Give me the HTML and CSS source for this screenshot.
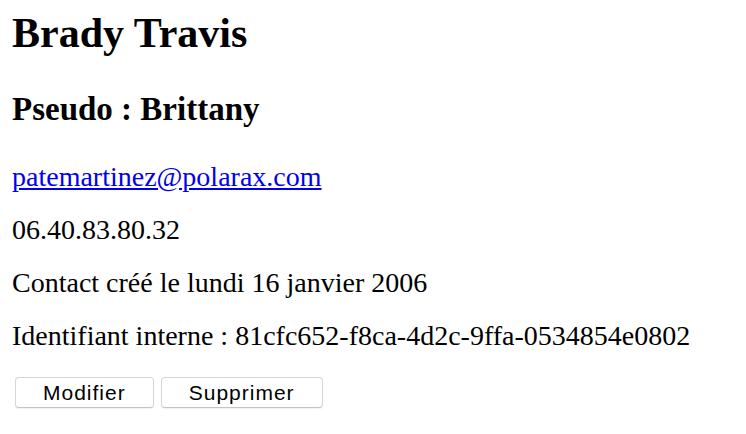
FILE: index.html
```html
<!DOCTYPE html>
<html>
<head>
    <meta charset="utf-8">
    <link rel="stylesheet" href="styles.css">
</head>
<body>
    <div class="contact">
        <h1>Brady Travis</h1>
        <h2>Pseudo : Brittany</h2>
        <p><a href="mailto:patemartinez@polarax.com">patemartinez@polarax.com</a></p>
        <p>06.40.83.80.32</p>
        <p>Contact créé le lundi 16 janvier 2006</p>
        <p>Identifiant interne : 81cfc652-f8ca-4d2c-9ffa-0534854e0802</p>
        <div class="actions">
            <button>Modifier</button>
            <button>Supprimer</button>
        </div>
    </div>
</body>
</html>
```

FILE: styles.css
```css
body {
    margin: 0;
    background: #fff;
    color: #000;
    font-family: "Liberation Serif", "Times New Roman", serif;
}
.contact {
    padding: 10px 12px;
}
h1 {
    font-size: 42px;
    line-height: 46px;
    margin: 0 0 35px;
}
h2 {
    font-size: 33px;
    line-height: 36px;
    margin: 0 0 34px;
}
p {
    font-size: 28px;
    line-height: 32px;
    margin: 0 0 21px;
}
a {
    color: #0000ee;
}
.actions {
    display: flex;
    gap: 7px;
    margin-top: 25px;
    padding-left: 3px;
}
button {
    font-family: "Liberation Sans", Arial, sans-serif;
    font-size: 21px;
    letter-spacing: 1px;
    height: 31px;
    padding: 0 27px;
    background: #fff;
    color: #000;
    border: 1px solid #d6d6d6;
    border-bottom-color: #c4c4c4;
    border-radius: 4px;
    box-shadow: 0 1px 1px rgba(0, 0, 0, 0.06);
}
```
